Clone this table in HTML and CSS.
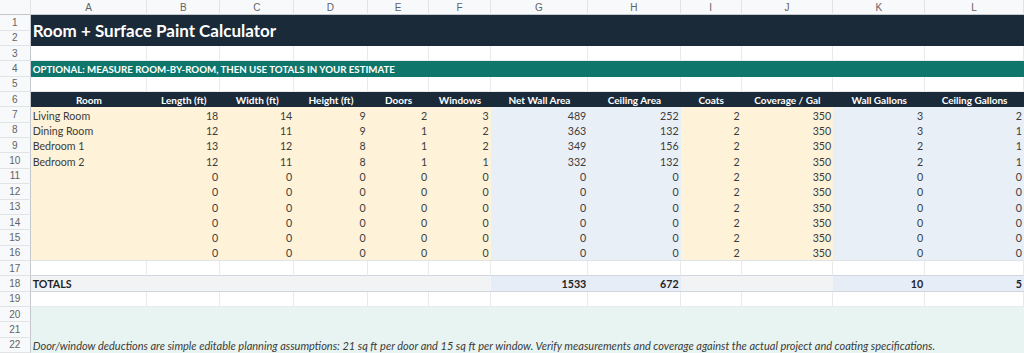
FILE: index.html
```html
<!DOCTYPE html>
<html lang="en">
<head>
<meta charset="utf-8">
<title>Room + Surface Paint Calculator</title>
<link rel="stylesheet" href="styles.css">
</head>
<body>
<div class="sheet">
  <div class="corner"></div>
  <div class="ch">A</div><div class="ch">B</div><div class="ch">C</div><div class="ch">D</div><div class="ch">E</div><div class="ch">F</div><div class="ch">G</div><div class="ch">H</div><div class="ch">I</div><div class="ch">J</div><div class="ch">K</div><div class="ch">L</div>

  <div class="rh">1</div>
  <div class="title">Room + Surface Paint Calculator</div>
  <div class="rh">2</div>

  <div class="rh">3</div>
  <div class="w"></div><div class="w"></div><div class="w"></div><div class="w"></div><div class="w"></div><div class="w"></div><div class="w"></div><div class="w"></div><div class="w"></div><div class="w"></div><div class="w"></div><div class="w"></div>

  <div class="rh">4</div>
  <div class="band">OPTIONAL: MEASURE ROOM-BY-ROOM, THEN USE TOTALS IN YOUR ESTIMATE</div>

  <div class="rh">5</div>
  <div class="w"></div><div class="w"></div><div class="w"></div><div class="w"></div><div class="w"></div><div class="w"></div><div class="w"></div><div class="w"></div><div class="w"></div><div class="w"></div><div class="w"></div><div class="w"></div>

  <div class="rh">6</div>
  <div class="th">Room</div><div class="th">Length (ft)</div><div class="th">Width (ft)</div><div class="th">Height (ft)</div><div class="th">Doors</div><div class="th">Windows</div><div class="th">Net Wall Area</div><div class="th">Ceiling Area</div><div class="th">Coats</div><div class="th">Coverage / Gal</div><div class="th">Wall Gallons</div><div class="th">Ceiling Gallons</div>

  <div class="rh">7</div>
  <div class="in">Living Room</div><div class="in num">18</div><div class="in num">14</div><div class="in num">9</div><div class="in num">2</div><div class="in num">3</div><div class="calc num">489</div><div class="calc num">252</div><div class="in num">2</div><div class="in num">350</div><div class="calc num">3</div><div class="calc num">2</div>

  <div class="rh">8</div>
  <div class="in">Dining Room</div><div class="in num">12</div><div class="in num">11</div><div class="in num">9</div><div class="in num">1</div><div class="in num">2</div><div class="calc num">363</div><div class="calc num">132</div><div class="in num">2</div><div class="in num">350</div><div class="calc num">3</div><div class="calc num">1</div>

  <div class="rh">9</div>
  <div class="in">Bedroom 1</div><div class="in num">13</div><div class="in num">12</div><div class="in num">8</div><div class="in num">1</div><div class="in num">2</div><div class="calc num">349</div><div class="calc num">156</div><div class="in num">2</div><div class="in num">350</div><div class="calc num">2</div><div class="calc num">1</div>

  <div class="rh">10</div>
  <div class="in">Bedroom 2</div><div class="in num">12</div><div class="in num">11</div><div class="in num">8</div><div class="in num">1</div><div class="in num">1</div><div class="calc num">332</div><div class="calc num">132</div><div class="in num">2</div><div class="in num">350</div><div class="calc num">2</div><div class="calc num">1</div>

  <div class="rh">11</div>
  <div class="in"></div><div class="in num">0</div><div class="in num">0</div><div class="in num">0</div><div class="in num">0</div><div class="in num">0</div><div class="calc num">0</div><div class="calc num">0</div><div class="in num">2</div><div class="in num">350</div><div class="calc num">0</div><div class="calc num">0</div>

  <div class="rh">12</div>
  <div class="in"></div><div class="in num">0</div><div class="in num">0</div><div class="in num">0</div><div class="in num">0</div><div class="in num">0</div><div class="calc num">0</div><div class="calc num">0</div><div class="in num">2</div><div class="in num">350</div><div class="calc num">0</div><div class="calc num">0</div>

  <div class="rh">13</div>
  <div class="in"></div><div class="in num">0</div><div class="in num">0</div><div class="in num">0</div><div class="in num">0</div><div class="in num">0</div><div class="calc num">0</div><div class="calc num">0</div><div class="in num">2</div><div class="in num">350</div><div class="calc num">0</div><div class="calc num">0</div>

  <div class="rh">14</div>
  <div class="in"></div><div class="in num">0</div><div class="in num">0</div><div class="in num">0</div><div class="in num">0</div><div class="in num">0</div><div class="calc num">0</div><div class="calc num">0</div><div class="in num">2</div><div class="in num">350</div><div class="calc num">0</div><div class="calc num">0</div>

  <div class="rh">15</div>
  <div class="in"></div><div class="in num">0</div><div class="in num">0</div><div class="in num">0</div><div class="in num">0</div><div class="in num">0</div><div class="calc num">0</div><div class="calc num">0</div><div class="in num">2</div><div class="in num">350</div><div class="calc num">0</div><div class="calc num">0</div>

  <div class="rh">16</div>
  <div class="in last"></div><div class="in num last">0</div><div class="in num last">0</div><div class="in num last">0</div><div class="in num last">0</div><div class="in num last">0</div><div class="calc num last">0</div><div class="calc num last">0</div><div class="in num last">2</div><div class="in num last">350</div><div class="calc num last">0</div><div class="calc num last">0</div>

  <div class="rh">17</div>
  <div class="w pre"></div><div class="w pre"></div><div class="w pre"></div><div class="w pre"></div><div class="w pre"></div><div class="w pre"></div><div class="w pre"></div><div class="w pre"></div><div class="w pre"></div><div class="w pre"></div><div class="w pre"></div><div class="w pre"></div>

  <div class="rh">18</div>
  <div class="tot">TOTALS</div><div class="tot"></div><div class="tot"></div><div class="tot"></div><div class="tot"></div><div class="tot"></div><div class="tot tcalc num">1533</div><div class="tot tcalc num">672</div><div class="tot"></div><div class="tot"></div><div class="tot tcalc num">10</div><div class="tot tcalc num">5</div>

  <div class="rh">19</div>
  <div class="w"></div><div class="w"></div><div class="w"></div><div class="w"></div><div class="w"></div><div class="w"></div><div class="w"></div><div class="w"></div><div class="w"></div><div class="w"></div><div class="w"></div><div class="w"></div>

  <div class="rh">20</div>
  <div class="note">Door/window deductions are simple editable planning assumptions: 21 sq ft per door and 15 sq ft per window. Verify measurements and coverage against the actual project and coating specifications.</div>
  <div class="rh">21</div>
  <div class="rh">22</div>
</div>
</body>
</html>
```

FILE: styles.css
```css
* { box-sizing: border-box; }
html, body { margin: 0; padding: 0; background: #ffffff; }
body { width: 1024px; height: 353px; overflow: hidden; }

.sheet {
  display: grid;
  grid-template-columns: 30.7px 116.6px 73px 74px 73.4px 61.6px 61.4px 97.6px 92.4px 61px 91.6px 92px 98.7px;
  grid-template-rows: repeat(23, 1fr);
  height: 353px;
  width: 1024px;
  font-family: Lato, "Open Sans", sans-serif;
  font-size: 10.67px;
  color: #3b3b3b;
}

.corner, .ch {
  background: #f8f9fa;
  border-right: 1px solid #e2e3e5;
  border-bottom: 1px solid #c4c7cb;
}
.ch {
  font-family: "Liberation Sans", Arial, sans-serif;
  font-size: 10px;
  color: #5f6368;
  display: flex;
  align-items: center;
  justify-content: center;
}
.rh {
  background: #f8f9fa;
  border-right: 1px solid #c4c7cb;
  border-bottom: 1px solid #e2e3e5;
  font-family: "Liberation Sans", Arial, sans-serif;
  font-size: 10px;
  color: #5f6368;
  display: flex;
  align-items: center;
  justify-content: center;
}

.w {
  background: #ffffff;
  border-right: 1px solid #e9eaec;
  border-bottom: 1px solid #e9eaec;
}
.w.pre { border-bottom-color: #cfd6de; }

.title {
  grid-column: span 12;
  grid-row: span 2;
  background: #1b2a39;
  color: #ffffff;
  font-weight: 700;
  font-size: 17px;
  display: flex;
  align-items: center;
  padding-left: 2px;
  white-space: nowrap;
}

.band {
  grid-column: span 12;
  background: #0f766b;
  color: #ffffff;
  font-weight: 700;
  font-size: 9.7px;
  display: flex;
  align-items: center;
  padding-left: 2px;
  white-space: nowrap;
}

.th {
  background: #1b2a39;
  color: #ffffff;
  font-weight: 700;
  font-size: 10px;
  display: flex;
  align-items: center;
  justify-content: center;
  white-space: nowrap;
}

.in, .calc, .tot {
  display: flex;
  align-items: center;
  padding: 0 2px;
  white-space: nowrap;
}
.in { background: #fef3d9; }
.calc { background: #e9eff7; }
.last { border-bottom: 1px solid #dfe4ea; }
.num { justify-content: flex-end; }

.tot {
  background: #f2f3f5;
  border-bottom: 1px solid #cfd6de;
  font-weight: 700;
  color: #1f2328;
}
.tot.tcalc { background: #e6edf6; }

.note {
  grid-column: span 12;
  grid-row: span 3;
  background: #e8f4f1;
  font-style: italic;
  font-size: 11px;
  display: flex;
  flex-wrap: wrap;
  align-content: flex-end;
  padding: 0 2px 1px;
  white-space: nowrap;
}
```
